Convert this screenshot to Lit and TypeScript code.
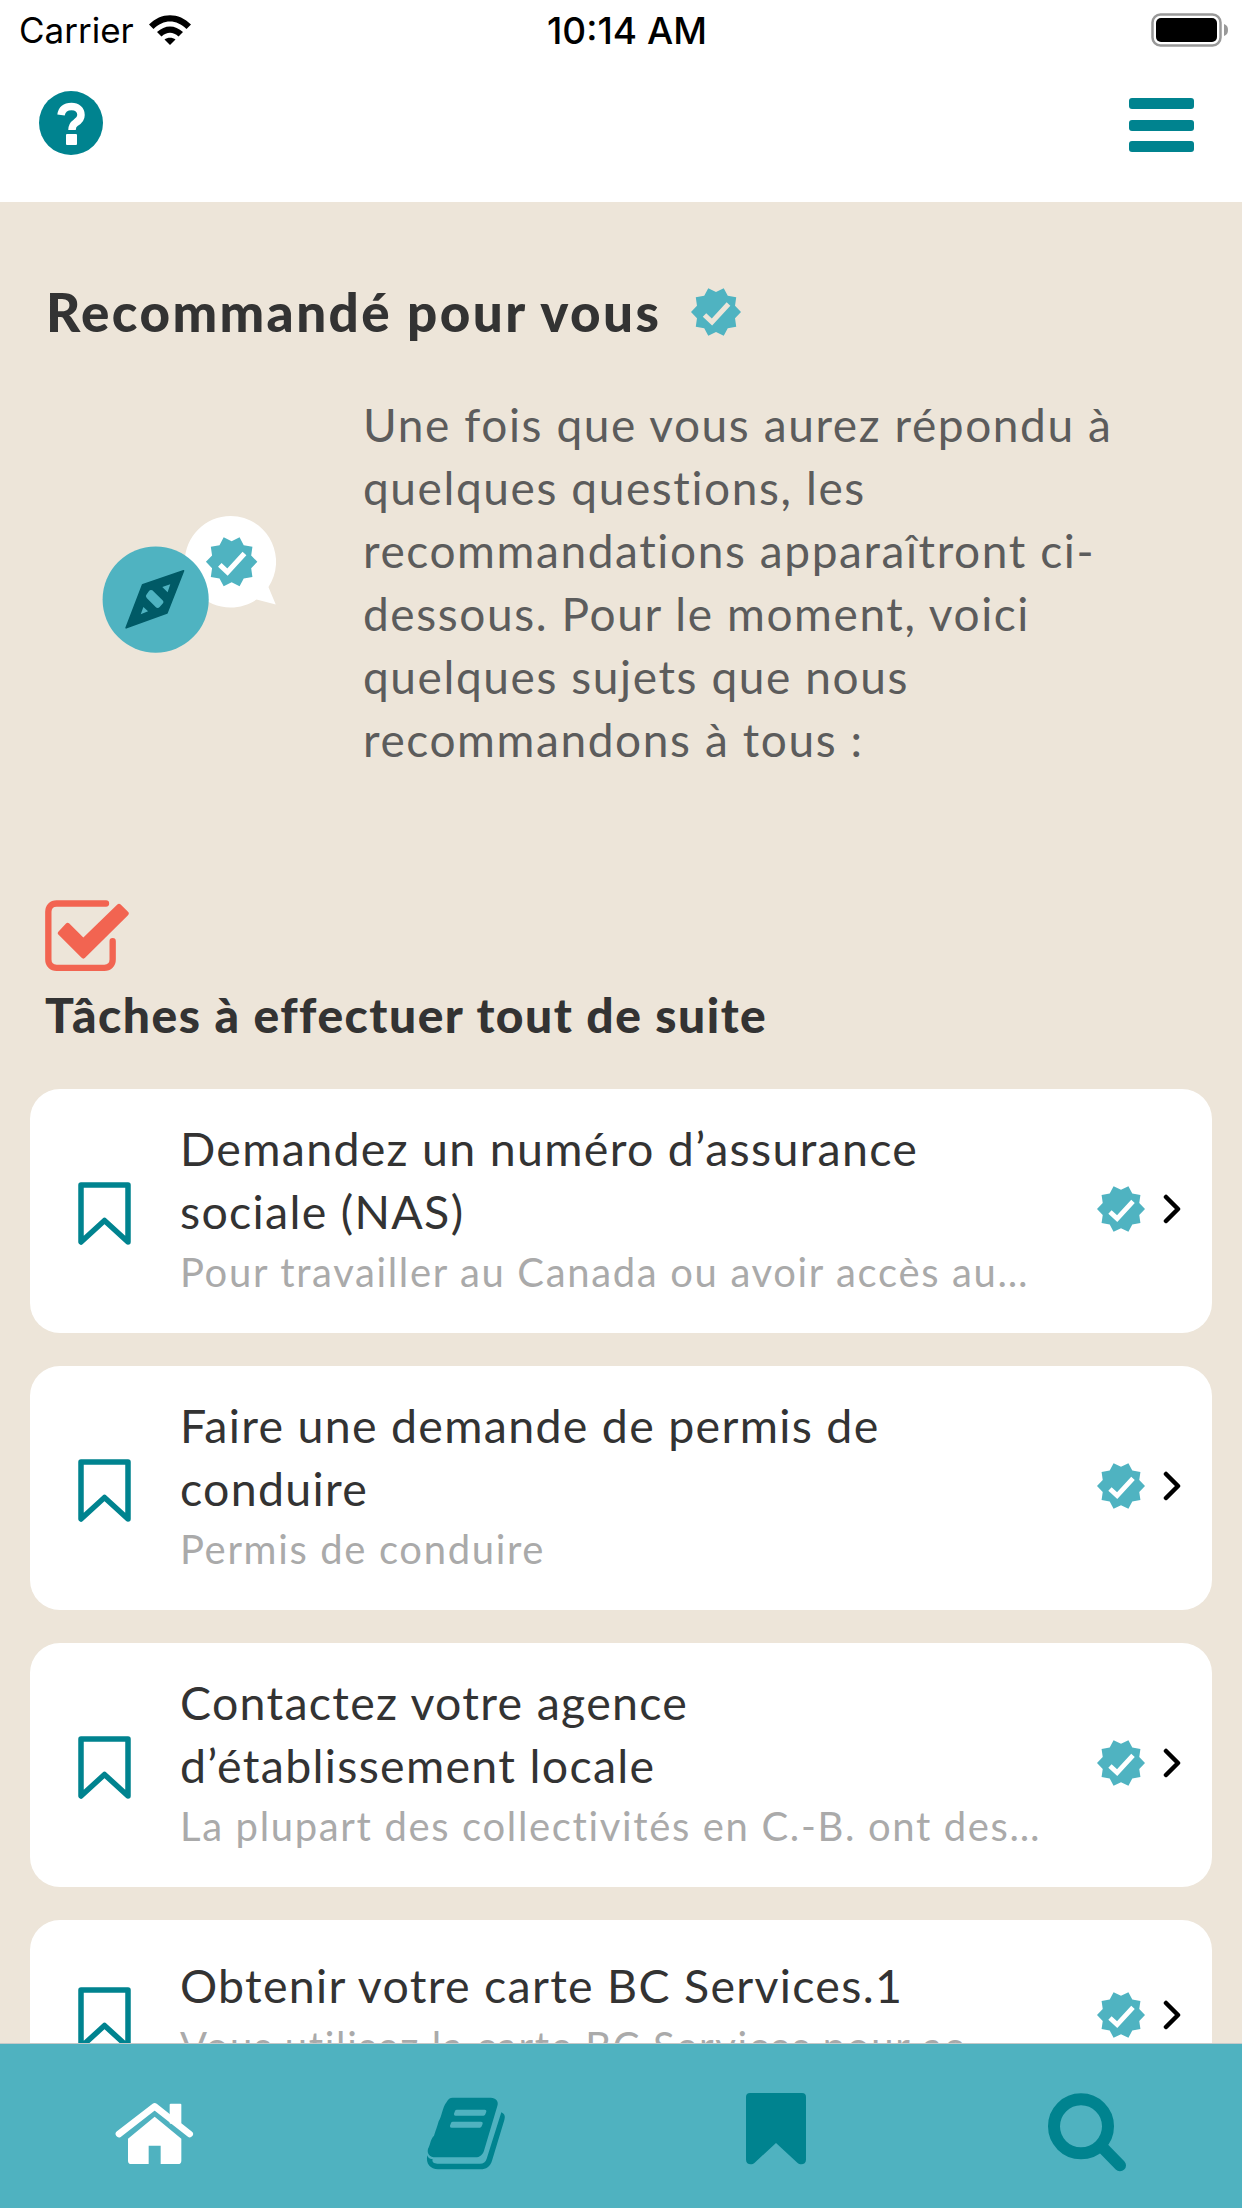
import { LitElement, html, css, svg } from "lit";
import { customElement } from "lit/decorators.js";

const TEAL = "#00838f";

function badgePoints(): string {
  const pts: string[] = [];
  for (let i = 0; i < 20; i++) {
    const r = i % 2 === 0 ? 25 : 20;
    const a = (i * Math.PI) / 10;
    pts.push(`${(r * Math.cos(a)).toFixed(2)},${(r * Math.sin(a)).toFixed(2)}`);
  }
  return pts.join(" ");
}
const BADGE = badgePoints();

const badgeShape = (check: string) => svg`
  <polygon points=${BADGE} fill="#4fb3c1"></polygon>
  <polyline points="-11.5,3 -4,10 12.5,-8" fill="none" stroke=${check} stroke-width="5"></polyline>`;

const badge = (cls: string, check: string) => html`
  <svg class=${cls} viewBox="-25 -25 50 50">${badgeShape(check)}</svg>`;

const bookmarkOutline = html`
  <svg class="bm" viewBox="0 0 53 63">
    <path d="M3 3H50V60L26.500 38.500L3 60Z" fill="none" stroke="${TEAL}" stroke-width="5.500" stroke-linejoin="round"></path>
  </svg>`;

const cards = [
  { title: "Demandez un numéro d’assurance sociale (NAS)", sub: "Pour travailler au Canada ou avoir accès au…", single: false },
  { title: "Faire une demande de permis de conduire", sub: "Permis de conduire", single: false },
  { title: "Contactez votre agence d’établissement locale", sub: "La plupart des collectivités en C.-B. ont des…", single: false },
  { title: "Obtenir votre carte BC Services.1", sub: "Vous utilisez la carte BC Services pour ac…", single: true },
];

@customElement("app-root")
export class AppRoot extends LitElement {
  static styles = css`
    :host {
      display: flex;
      flex-direction: column;
      width: 1242px;
      height: 2208px;
      overflow: hidden;
      background: #ede5d9;
      font-family: Lato, "Liberation Sans", sans-serif;
    }
    .status {
      height: 60px;
      flex: none;
      background: #fff;
      display: grid;
      grid-template-columns: 1fr auto 1fr;
      align-items: center;
      padding: 0 13px 0 19px;
      font-family: Inter, "Liberation Sans", sans-serif;
      font-size: 35px;
      color: #000;
    }
    .status-left {
      display: flex;
      align-items: center;
      gap: 15px;
    }
    .wifi {
      width: 42px;
      height: 30px;
    }
    .time {
      font-weight: 500;
      font-size: 37px;
      margin-left: 6px;
    }
    .battery {
      justify-self: end;
      width: 78px;
      height: 34px;
    }
    .nav {
      height: 142px;
      flex: none;
      background: #fff;
      display: flex;
      justify-content: space-between;
      align-items: flex-start;
      padding: 31px 48px 0 39px;
      box-sizing: border-box;
    }
    .help {
      width: 64px;
      height: 64px;
    }
    .menu {
      display: flex;
      flex-direction: column;
      gap: 10.500px;
      width: 65px;
      padding-top: 7px;
    }
    .menu span {
      height: 11px;
      border-radius: 3px;
      background: #00838f;
    }
    .content {
      flex: 1;
      min-height: 0;
      overflow: hidden;
      padding: 77px 30px 0;
    }
    h1 {
      margin: 0;
      padding-left: 16px;
      display: flex;
      align-items: center;
      gap: 30px;
      font-size: 53px;
      letter-spacing: 2.400px;
      line-height: 66px;
      font-weight: 900;
      color: #333;
    }
    .h-badge {
      width: 50px;
      height: 50px;
    }
    .intro {
      display: grid;
      grid-template-columns: 333px 1fr;
      align-items: center;
      margin-top: 48px;
      padding-right: 20px;
    }
    .illus {
      width: 174px;
      height: 137px;
      margin: 4px 0 0 72px;
    }
    .intro p {
      margin: 0;
      font-size: 46px;
      letter-spacing: 1.600px;
      line-height: 63px;
      color: #5c5c5c;
    }
    .task-icon {
      display: block;
      width: 84px;
      height: 72px;
      margin: 129px 0 0 15px;
    }
    h2 {
      margin: 13px 0 44px 15px;
      font-size: 48px;
      letter-spacing: 1.500px;
      line-height: 60px;
      font-weight: 900;
      color: #333;
    }
    .cards {
      display: flex;
      flex-direction: column;
      gap: 33px;
    }
    .card {
      display: grid;
      grid-template-columns: 150px 1fr auto;
      align-items: center;
      background: #fff;
      border-radius: 30px;
      padding: 28px 31px 32px 0;
    }
    .card.single {
      padding-top: 34px;
      padding-bottom: 36px;
    }
    .bm {
      width: 53px;
      height: 63px;
      margin: 8px 0 0 48px;
    }
    .title {
      font-size: 46.500px;
      letter-spacing: 1.300px;
      line-height: 63px;
      color: #333;
    }
    .sub {
      font-size: 40px;
      letter-spacing: 1.650px;
      line-height: 58px;
      color: #aaa;
      white-space: nowrap;
    }
    .text {
      width: 830px;
    }
    .trail {
      display: flex;
      align-items: center;
      gap: 17px;
    }
    .c-badge {
      width: 50px;
      height: 48px;
    }
    .chev {
      width: 18px;
      height: 30px;
    }
    .tabs {
      flex: none;
      height: 165px;
      box-sizing: border-box;
      background: #4fb2c0;
      border-top: 1px solid #c4c9c9;
      display: grid;
      grid-template-columns: repeat(4, 1fr);
      justify-items: center;
      padding-top: 49px;
    }
    .tabs svg {
      width: 82px;
      height: 82px;
    }
  `;

  render() {
    return html`
      <div class="status">
        <div class="status-left">
          <span>Carrier</span>
          <svg class="wifi" viewBox="0 0 42 30">
            <path d="M0 9.500C12 -3 30 -3 42 9.500L37.500 14C27.500 4 14.500 4 4.500 14Z" fill="#000"></path>
            <path d="M8 17C16 9.500 26 9.500 34 17L29.500 21.500C24 16.500 18 16.500 12.500 21.500Z" fill="#000"></path>
            <path d="M15.500 24.500C18.500 22 23.500 22 26.500 24.500L21 30Z" fill="#000"></path>
          </svg>
        </div>
        <span class="time">10:14 AM</span>
        <svg class="battery" viewBox="0 0 78 34">
          <rect x="1.500" y="1.500" width="68" height="31" rx="8" fill="none" stroke="#999" stroke-width="2.500"></rect>
          <rect x="5" y="5" width="61" height="24" rx="5" fill="#000"></rect>
          <path d="M73 11C76 12 77 14 77 17C77 20 76 22 73 23Z" fill="#999"></path>
        </svg>
      </div>
      <div class="nav">
        <svg class="help" viewBox="0 0 64 64">
          <circle cx="32" cy="32" r="32" fill="${TEAL}"></circle>
          <path d="M22 24C23 18 27 15.500 32.500 15.500C38 15.500 42 19 42 24C42 28 39.500 30 37 31.500C34 33.500 33 35 33 39" fill="none" stroke="#fff" stroke-width="7.500"></path>
          <rect x="27" y="43" width="11" height="11" rx="1" fill="#fff"></rect>
        </svg>
        <div class="menu"><span></span><span></span><span></span></div>
      </div>
      <div class="content">
        <h1>Recommandé pour vous ${badge("h-badge", "#ede5d9")}</h1>
        <div class="intro">
          <svg class="illus" viewBox="125 738 523 413">
            <path d="M512 738C588 738 649 800 649 876C649 905 640 930 626 952L648 1005L590 990C567 1005 540 1014 512 1014C436 1014 374 952 374 876C374 800 436 738 512 738Z" fill="#fff"></path>
            <g transform="translate(515 876) scale(3.100)">${badgeShape("#fff")}</g>
            <circle cx="286" cy="990" r="160" fill="#4fb3c1"></circle>
            <path d="M370 903L320 1030L197 1075L247 945Z" fill="#005a66" stroke="#005a66" stroke-width="5" stroke-linejoin="round"></path>
            <path d="M276 962L306 991A8 8 0 0 1 306 1003L298 1012A8 8 0 0 1 286 1012L259 985A8 8 0 0 1 259 974L266 964A8 8 0 0 1 276 962Z" fill="#4fb3c1"></path>
            <path d="M330 944L306 952L322 968Z M241 1034L263 1025L249 1012Z" fill="#4fb3c1"></path>
          </svg>
          <p>Une fois que vous aurez répondu à quelques questions, les recommandations apparaîtront ci-dessous. Pour le moment, voici quelques sujets que nous recommandons à tous :</p>
        </div>
        <svg class="task-icon" viewBox="75 62 252 215">
          <path d="M258 72H110C95 72 85 82 85 97V240C85 255 95 265 110 265H253C268 265 278 255 278 240V185" fill="none" stroke="#f26451" stroke-width="19" stroke-linecap="round"></path>
          <path d="M115 157L138 132A7 7 0 0 1 148 132L190 174L292 75A7 7 0 0 1 302 75L324 97A7 7 0 0 1 324 107L196 234A8 8 0 0 1 184 234L115 165A6 6 0 0 1 115 157Z" fill="#f26451"></path>
        </svg>
        <h2>Tâches à effectuer tout de suite</h2>
        <div class="cards">
          ${cards.map(
            (c) => html`
              <div class="card ${c.single ? "single" : ""}">
                ${bookmarkOutline}
                <div class="text">
                  <div class="title">${c.title}</div>
                  <div class="sub">${c.sub}</div>
                </div>
                <div class="trail">
                  ${badge("c-badge", "#fff")}
                  <svg class="chev" viewBox="0 0 18 30">
                    <polyline points="3,3 15,15 3,27" fill="none" stroke="#000" stroke-width="4.500" stroke-linecap="round" stroke-linejoin="round"></polyline>
                  </svg>
                </div>
              </div>
            `
          )}
        </div>
      </div>
      <div class="tabs">
        <svg viewBox="103 85 246 246">
          <path d="M118 208L225 125L330 208" fill="none" stroke="#fff" stroke-width="20" stroke-linecap="round" stroke-linejoin="round"></path>
          <rect x="270" y="117" width="35" height="60" rx="3" fill="#fff"></rect>
          <path d="M145 222L225 156L305 222V288A10 10 0 0 1 295 298H243V243H207V298H155A10 10 0 0 1 145 288Z" fill="#fff"></path>
        </svg>
        <svg viewBox="1035 85 246 246">
          <path d="M1118 99H1232C1248 99 1257 110 1252 124L1212 258C1208 270 1200 278 1186 278H1066C1050 278 1040 268 1044 252C1052 240 1050 225 1062 213C1066 200 1072 185 1076 170C1086 155 1086 130 1100 112C1104 103 1110 99 1118 99Z" fill="${TEAL}"></path>
          <path d="M1131 135H1214A5 5 0 0 1 1219 141L1216 149A6 6 0 0 1 1210 153H1127A5 5 0 0 1 1122 147L1125 139A6 6 0 0 1 1131 135Z M1119 171H1203A5 5 0 0 1 1208 177L1205 185A6 6 0 0 1 1199 189H1115A5 5 0 0 1 1110 183L1113 175A6 6 0 0 1 1119 171Z" fill="#4fb2c0"></path>
          <path d="M1264 143C1275 148 1276 156 1273 166L1236 288C1231 305 1218 314 1202 314H1074C1052 314 1036 298 1042 272C1046 284 1052 282 1058 284C1055 292 1062 297 1072 297H1200C1210 297 1217 292 1220 282Z" fill="${TEAL}"></path>
        </svg>
        <svg viewBox="45 68 246 246">
          <path d="M78 80A12 12 0 0 1 90 68H246A12 12 0 0 1 258 80V268C258 282 242 286 232 277L168 218L104 277C94 286 78 282 78 268Z" fill="${TEAL}"></path>
        </svg>
        <svg viewBox="978 68 246 246">
          <circle cx="1083" cy="168" r="81" fill="none" stroke="${TEAL}" stroke-width="36"></circle>
          <line x1="1148" y1="232" x2="1200" y2="285" stroke="${TEAL}" stroke-width="36" stroke-linecap="round"></line>
        </svg>
      </div>
    `;
  }
}
